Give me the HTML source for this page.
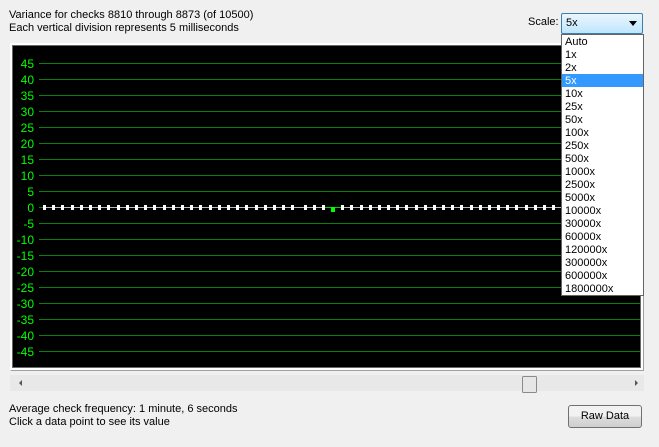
<!DOCTYPE html>
<html><head><style>
body{margin:0;width:659px;height:447px;background:#f0f0f0;font-family:"Liberation Sans",sans-serif;font-size:11px;color:#000;position:relative;overflow:hidden}
.a{position:absolute}
.list div{height:13px;line-height:14px;padding-left:3px}
</style></head><body>
<div class="a" style="left:9px;top:9px;line-height:13px">Variance for checks 8810 through 8873 (of 10500)<br>Each vertical division represents 5 milliseconds</div>
<div class="a" style="left:10px;top:43px;width:632px;height:326px;border:1px solid #fff;border-right-color:#a0a0a0;border-bottom-color:#a0a0a0;background:#fff"></div>
<div class="a" style="left:12px;top:45px;width:627px;height:321px;border:1px solid #696969;background:#000"></div>
<svg class="a" style="left:0;top:0" width="659" height="447">
<g stroke="#0a800a" stroke-width="1">
<line x1="39" x2="640" y1="63.5" y2="63.5"/><line x1="39" x2="640" y1="79.5" y2="79.5"/><line x1="39" x2="640" y1="95.5" y2="95.5"/><line x1="39" x2="640" y1="111.5" y2="111.5"/><line x1="39" x2="640" y1="127.5" y2="127.5"/><line x1="39" x2="640" y1="143.5" y2="143.5"/><line x1="39" x2="640" y1="159.5" y2="159.5"/><line x1="39" x2="640" y1="175.5" y2="175.5"/><line x1="39" x2="640" y1="191.5" y2="191.5"/><line x1="39" x2="640" y1="207.5" y2="207.5"/><line x1="39" x2="640" y1="223.5" y2="223.5"/><line x1="39" x2="640" y1="239.5" y2="239.5"/><line x1="39" x2="640" y1="255.5" y2="255.5"/><line x1="39" x2="640" y1="271.5" y2="271.5"/><line x1="39" x2="640" y1="287.5" y2="287.5"/><line x1="39" x2="640" y1="303.5" y2="303.5"/><line x1="39" x2="640" y1="319.5" y2="319.5"/><line x1="39" x2="640" y1="335.5" y2="335.5"/><line x1="39" x2="640" y1="351.5" y2="351.5"/>
</g>
<g fill="#00ff00" font-family="Liberation Sans,sans-serif" font-size="12" text-anchor="end">
<text x="34" y="68">45</text><text x="34" y="84">40</text><text x="34" y="100">35</text><text x="34" y="116">30</text><text x="34" y="132">25</text><text x="34" y="148">20</text><text x="34" y="164">15</text><text x="34" y="180">10</text><text x="34" y="196">5</text><text x="34" y="212">0</text><text x="34" y="228">-5</text><text x="34" y="244">-10</text><text x="34" y="260">-15</text><text x="34" y="276">-20</text><text x="34" y="292">-25</text><text x="34" y="308">-30</text><text x="34" y="324">-35</text><text x="34" y="340">-40</text><text x="34" y="356">-45</text>
</g>
<line x1="44" x2="640" y1="207.5" y2="207.5" stroke="#bbb"/>
<line x1="324" x2="342" y1="207.5" y2="207.5" stroke="#0c0"/>
<g fill="#fff">
<rect x="43" y="205" width="3" height="5"/><rect x="52" y="205" width="3" height="5"/><rect x="61" y="205" width="3" height="5"/><rect x="71" y="205" width="3" height="5"/><rect x="80" y="205" width="3" height="5"/><rect x="89" y="205" width="3" height="5"/><rect x="98" y="205" width="3" height="5"/><rect x="107" y="205" width="3" height="5"/><rect x="117" y="205" width="3" height="5"/><rect x="126" y="205" width="3" height="5"/><rect x="135" y="205" width="3" height="5"/><rect x="144" y="205" width="3" height="5"/><rect x="153" y="205" width="3" height="5"/><rect x="163" y="205" width="3" height="5"/><rect x="172" y="205" width="3" height="5"/><rect x="181" y="205" width="3" height="5"/><rect x="190" y="205" width="3" height="5"/><rect x="199" y="205" width="3" height="5"/><rect x="209" y="205" width="3" height="5"/><rect x="218" y="205" width="3" height="5"/><rect x="227" y="205" width="3" height="5"/><rect x="236" y="205" width="3" height="5"/><rect x="245" y="205" width="3" height="5"/><rect x="255" y="205" width="3" height="5"/><rect x="264" y="205" width="3" height="5"/><rect x="273" y="205" width="3" height="5"/><rect x="282" y="205" width="3" height="5"/><rect x="291" y="205" width="3" height="5"/><rect x="304" y="205" width="3" height="5"/><rect x="313" y="205" width="3" height="5"/><rect x="322" y="205" width="3" height="5"/><rect x="341" y="205" width="3" height="5"/><rect x="350" y="205" width="3" height="5"/><rect x="360" y="205" width="3" height="5"/><rect x="369" y="205" width="3" height="5"/><rect x="378" y="205" width="3" height="5"/><rect x="387" y="205" width="3" height="5"/><rect x="396" y="205" width="3" height="5"/><rect x="405" y="205" width="3" height="5"/><rect x="415" y="205" width="3" height="5"/><rect x="424" y="205" width="3" height="5"/><rect x="433" y="205" width="3" height="5"/><rect x="442" y="205" width="3" height="5"/><rect x="451" y="205" width="3" height="5"/><rect x="460" y="205" width="3" height="5"/><rect x="470" y="205" width="3" height="5"/><rect x="479" y="205" width="3" height="5"/><rect x="488" y="205" width="3" height="5"/><rect x="497" y="205" width="3" height="5"/><rect x="506" y="205" width="3" height="5"/><rect x="515" y="205" width="3" height="5"/><rect x="525" y="205" width="3" height="5"/><rect x="534" y="205" width="3" height="5"/><rect x="543" y="205" width="3" height="5"/><rect x="552" y="205" width="3" height="5"/>
</g>
<rect x="331" y="207" width="4" height="5" fill="#0f0"/>
<rect x="10" y="375" width="634" height="16" fill="#e8e8e8"/>
<polygon points="19,383 22,380 22,386" fill="#555"/>
<polygon points="638,383 635,380 635,386" fill="#555"/>
<rect x="522.5" y="376.5" width="14" height="16" rx="1" fill="#e6e6e6" stroke="#8a8a8a"/>
</svg>
<div class="a" style="left:528px;top:16px">Scale:</div>
<div class="a" style="left:561px;top:13px;width:80px;height:19px;border:1px solid #3c7fb1;border-radius:2px;background:linear-gradient(#eaf6fd,#bee6fd)"><span style="position:absolute;left:4px;top:3px">5x</span><span style="position:absolute;right:5px;top:7px;border:4px solid transparent;border-top:5px solid #000;border-bottom:0"></span></div>
<div class="a list" style="left:561px;top:34px;width:81px;height:260px;border:1px solid #646464;background:#fff">
<div>Auto</div><div>1x</div><div>2x</div><div style="background:#3399ff;color:#fff">5x</div><div>10x</div><div>25x</div><div>50x</div><div>100x</div><div>250x</div><div>500x</div><div>1000x</div><div>2500x</div><div>5000x</div><div>10000x</div><div>30000x</div><div>60000x</div><div>120000x</div><div>300000x</div><div>600000x</div><div>1800000x</div>
</div>
<div class="a" style="left:9px;top:403px;line-height:13px">Average check frequency: 1 minute, 6 seconds<br>Click a data point to see its value</div>
<div class="a" style="left:568px;top:405px;width:72px;height:21px;border:1px solid #707070;border-radius:3px;background:linear-gradient(#f2f2f2 50%,#dddddd 50%,#cfcfcf);text-align:center;line-height:21px">Raw Data</div>
</body></html>
